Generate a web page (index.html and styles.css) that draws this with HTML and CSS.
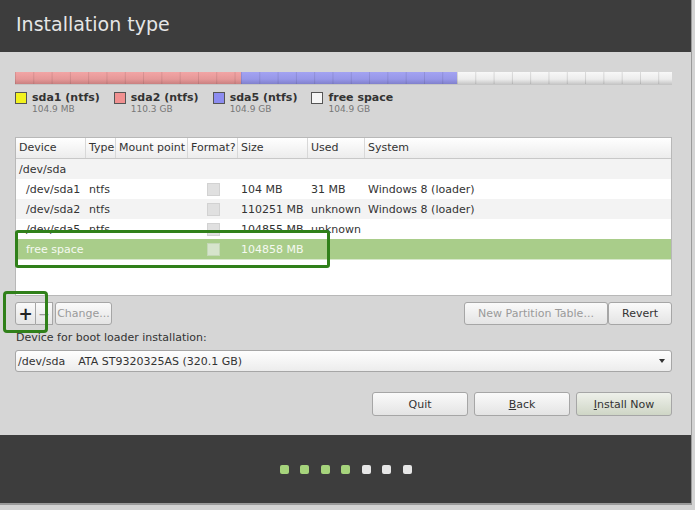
FILE: index.html
```html
<!DOCTYPE html>
<html>
<head>
<meta charset="utf-8">
<link rel="stylesheet" href="styles.css">
</head>
<body>
<div class="window">
  <div class="header"><h1 class="title">Installation type</h1></div>
  <div class="main">
    <div class="pbar">
      <div class="seg seg-pink" style="width:226px"></div>
      <div class="seg seg-blue" style="width:216px"></div>
      <div class="seg seg-white"></div>
    </div>
    <div class="legend">
      <div class="litem"><span class="sw sw-yellow"></span><div class="ltext"><div class="lname">sda1 (ntfs)</div><div class="lsize">104.9 MB</div></div></div>
      <div class="litem"><span class="sw sw-pink"></span><div class="ltext"><div class="lname">sda2 (ntfs)</div><div class="lsize">110.3 GB</div></div></div>
      <div class="litem"><span class="sw sw-blue"></span><div class="ltext"><div class="lname">sda5 (ntfs)</div><div class="lsize">104.9 GB</div></div></div>
      <div class="litem"><span class="sw sw-white"></span><div class="ltext"><div class="lname">free space</div><div class="lsize">104.9 GB</div></div></div>
    </div>
    <div class="table">
      <div class="row thead">
        <div class="c">Device</div><div class="c">Type</div><div class="c">Mount point</div><div class="c">Format?</div><div class="c">Size</div><div class="c">Used</div><div class="c">System</div>
      </div>
      <div class="row odd"><div class="c">/dev/sda</div><div class="c"></div><div class="c"></div><div class="c"></div><div class="c"></div><div class="c"></div><div class="c"></div></div>
      <div class="row"><div class="c ind">/dev/sda1</div><div class="c">ntfs</div><div class="c"></div><div class="c"><span class="cb"></span></div><div class="c">104 MB</div><div class="c">31 MB</div><div class="c">Windows 8 (loader)</div></div>
      <div class="row odd"><div class="c ind">/dev/sda2</div><div class="c">ntfs</div><div class="c"></div><div class="c"><span class="cb"></span></div><div class="c">110251 MB</div><div class="c">unknown</div><div class="c">Windows 8 (loader)</div></div>
      <div class="row"><div class="c ind">/dev/sda5</div><div class="c">ntfs</div><div class="c"></div><div class="c"><span class="cb"></span></div><div class="c">104855 MB</div><div class="c">unknown</div><div class="c"></div></div>
      <div class="row sel"><div class="c ind">free space</div><div class="c"></div><div class="c"></div><div class="c"><span class="cb"></span></div><div class="c">104858 MB</div><div class="c"></div><div class="c"></div></div>
      <div class="hl hl-row"></div>
    </div>
    <div class="btnrow">
      <div class="left">
        <button class="btn btn-plus">+</button><button class="btn btn-minus dis">−</button><button class="btn btn-change dis">Change...</button>
        <div class="hl hl-plus"></div>
      </div>
      <div class="right">
        <button class="btn btn-npt dis">New Partition Table...</button><button class="btn btn-revert">Revert</button>
      </div>
    </div>
    <div class="bootlabel">Device for boot loader installation:</div>
    <div class="combo"><span><span class="dev">/dev/sda</span>ATA ST9320325AS (320.1 GB)</span><span class="arrow"></span></div>
    <div class="actions">
      <button class="btn act">Quit</button>
      <button class="btn act"><u>B</u>ack</button>
      <button class="btn act primary"><u>I</u>nstall Now</button>
    </div>
  </div>
  <div class="footer">
    <span class="dot on"></span><span class="dot on"></span><span class="dot on"></span><span class="dot on"></span><span class="dot"></span><span class="dot"></span><span class="dot"></span>
  </div>
</div>
</body>
</html>
```
FILE: styles.css
```css
html, body {
  margin: 0;
  padding: 0;
  background: #d3d3d3;
  font-family: "DejaVu Sans", "Liberation Sans", sans-serif;
  color: #333;
}
.window {
  width: 691px;
  height: 503px;
  border-right: 1px solid #9a9a9a;
  border-bottom: 2px solid #9a9a9a;
  background: #d6d6d6;
  display: flex;
  flex-direction: column;
}
.window > * { flex-shrink: 0; }
.header {
  height: 52px;
  background: #3d3d3d;
  display: flex;
  align-items: center;
  padding-left: 16px;
  box-sizing: border-box;
}
.title {
  margin: 0;
  font-weight: normal;
  font-size: 19px;
  color: #e6e6e6;
  padding-bottom: 4px;
}
.main {
  flex: 1;
  padding: 20px 19px 0 15px;
  display: flex;
  flex-direction: column;
}
.main > * { flex-shrink: 0; }
.pbar {
  height: 12px;
  display: flex;
  box-shadow: 0 1px 0 rgba(0,0,0,0.08);
}
.seg {
  height: 100%;
  background-size: 18.3px 100%, 100% 100%;
}
.seg-pink {
  background-image: linear-gradient(to right, rgba(0,0,0,0.1) 1px, transparent 1px), linear-gradient(#f2a5a5, #e59898 60%, #c98080);
}
.seg-blue {
  background-image: linear-gradient(to right, rgba(0,0,0,0.1) 1px, transparent 1px), linear-gradient(#a3a3f2, #9797e8 60%, #8080cc);
}
.seg-white {
  flex: 1;
  background-image: linear-gradient(to right, rgba(0,0,0,0.12) 1px, transparent 1px), linear-gradient(#f8f8f8, #ececec 60%, #c8c8c8);
}
.legend {
  display: flex;
  gap: 14px;
  margin-top: 7px;
  height: 24px;
}
.litem {
  display: flex;
  gap: 5px;
  align-items: flex-start;
}
.sw {
  width: 10px;
  height: 10px;
  border: 1px solid #555;
  margin-top: 1px;
  display: block;
}
.sw-yellow { background: #f2f21e; }
.sw-pink { background: #f09090; }
.sw-blue { background: #8c8cf0; }
.sw-white { background: #f6f6f6; }
.lname {
  font-weight: bold;
  font-size: 11px;
  line-height: 13px;
  color: #333;
}
.lsize {
  font-size: 9px;
  line-height: 11px;
  color: #777;
}
.table {
  position: relative;
  margin-top: 22px;
  height: 159px;
  background: #fff;
  border: 1px solid #b8b8b8;
  box-sizing: border-box;
  font-size: 11px;
}
.row {
  display: grid;
  grid-template-columns: 70px 30px 72px 50px 70px 57px 1fr;
  height: 20px;
  align-items: center;
  color: #333;
}
.row .c {
  padding-left: 3px;
  white-space: nowrap;
  overflow: hidden;
}
.row .c.ind { padding-left: 10px; }
.thead {
  background: linear-gradient(#ffffff, #ececec);
  border-bottom: 1px solid #c8c8c8;
  height: 20px;
}
.thead .c {
  border-right: 1px solid #d8d8d8;
  height: 20px;
  line-height: 20px;
  padding-left: 3px;
}
.thead .c:last-child { border-right: none; }
.odd { background: #f3f3f3; }
.sel { background: #a9cd8a; color: #f5f9f1; }
.sel { border-bottom: 1px solid #d8e8cc; }
.cb {
  display: block;
  width: 11px;
  height: 11px;
  margin-left: 16px;
  background: #e0e0e0;
  border: 1px solid #d2d2d2;
}
.sel .cb { background: #d6e4cc; border-color: #c4d8b6; }
.hl {
  position: absolute;
  border: 3px solid #30801a;
  border-radius: 3px;
  box-sizing: border-box;
}
.hl-row {
  left: -1px;
  top: 92px;
  width: 315px;
  height: 38px;
}
.btnrow {
  display: flex;
  justify-content: space-between;
  margin-top: 6px;
  height: 23px;
}
.left, .right {
  display: flex;
  position: relative;
}
.btn {
  font-family: "DejaVu Sans", "Liberation Sans", sans-serif;
  font-size: 11px;
  color: #333;
  background: linear-gradient(#fafafa, #e4e4e4);
  border: 1px solid #a6a6a6;
  border-radius: 3px;
  padding: 0;
  height: 23px;
  margin: 0;
}
.btn.dis { color: #9a9a9a; }
.btn-plus { width: 21px; font-size: 17px; font-weight: bold; line-height: 18px; color: #222; border-radius: 3px 0 0 3px; }
.btn-minus { width: 17px; border-left: none; border-radius: 0; font-size: 14px; color: #888; }
.btn-change { width: 57px; margin-left: 2px; }
.btn-npt { width: 144px; }
.btn-revert { width: 64px; }
.hl-plus {
  left: -12px;
  top: -11px;
  width: 45px;
  height: 42px;
  border-radius: 4px;
}
.bootlabel {
  font-size: 11px;
  margin-top: 6px;
  margin-left: 1px;
  line-height: 14px;
  height: 14px;
  color: #333;
}
.combo {
  margin-top: 5px;
  height: 22px;
  border: 1px solid #a6a6a6;
  border-radius: 3px;
  background: linear-gradient(#fefefe, #ececec);
  box-sizing: border-box;
  display: flex;
  align-items: center;
  justify-content: space-between;
  padding: 0 6px 0 2px;
  font-size: 11px;
  color: #333;
}
.dev { margin-right: 13px; }
.arrow {
  width: 0;
  height: 0;
  border-left: 3px solid transparent;
  border-right: 3px solid transparent;
  border-top: 4px solid #333;
}
.actions {
  display: flex;
  justify-content: flex-end;
  gap: 6px;
  margin-top: 20px;
}
.act {
  width: 96px;
  height: 24px;
}
.primary {
  background: linear-gradient(#eef0ea, #cfd6c6);
}
.footer {
  height: 68px;
  margin-top: 19px;
  background: #3d3d3d;
  display: flex;
  justify-content: center;
  align-items: center;
  gap: 11.5px;
}
.dot {
  width: 9px;
  height: 9px;
  border-radius: 2px;
  background: #e6e6e6;
}
.dot.on { background: #a6d47c; }
```
